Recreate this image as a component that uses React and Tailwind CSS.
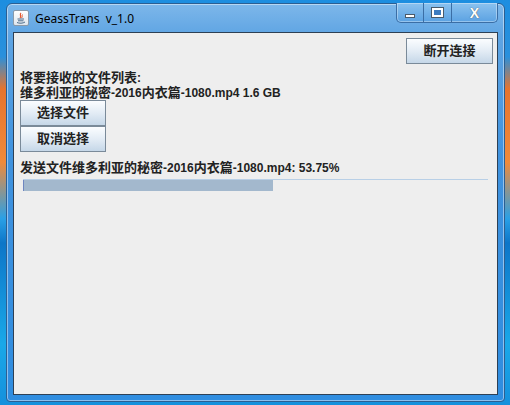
import React from 'react';

const font = { fontFamily: '"Liberation Sans", "Noto Sans CJK SC", sans-serif' };

// CJK glyphs render a touch larger than the latin runs, like the Java dialog font
const Mixed = ({ text }) => (
    <>
        {text.split(/([\u4e00-\u9fff]+)/).map((part, i) =>
            /[\u4e00-\u9fff]/.test(part)
                ? <span key={i} className="text-[13px] leading-[14px]">{part}</span>
                : <span key={i}>{part}</span>
        )}
    </>
);

const WinButton = ({ children, className = '' }) => (
    <button
        className={`h-[26px] border border-[#7a8a99] bg-gradient-to-b from-[#fbfdff] via-[#e3ecf5] to-[#c5d7e8] text-[13px] font-bold text-[#222] ${className}`}
        style={font}
    >
        {children}
    </button>
);

const JavaIcon = () => (
    <div className="w-[16px] h-[16px] rounded-[2px] border border-[#8a9aaa] bg-gradient-to-b from-white to-[#dfe6ee] flex items-center justify-center">
        <svg width="12" height="12" viewBox="0 0 12 12">
            <path d="M6 1 C4 3 7 4 5 6" stroke="#e4572e" strokeWidth="1.2" fill="none" />
            <path d="M7.5 2.5 C6.5 4 8 4.5 6.5 6" stroke="#e4572e" strokeWidth="1" fill="none" />
            <path d="M2.5 7 H9" stroke="#4a6b8a" strokeWidth="1" />
            <path d="M3 8.8 H8.5" stroke="#4a6b8a" strokeWidth="1" />
            <path d="M2 10.5 C4 11.5 8 11.5 10 10" stroke="#4a6b8a" strokeWidth="1" fill="none" />
        </svg>
    </div>
);

const App = () => {
    return (
        <div className="w-[510px] h-[405px] overflow-hidden pt-[3px] pl-[6px] pr-[5px] pb-[3px] bg-[linear-gradient(180deg,#1d8ee0_0%,#2a90dc_14%,#e6742e_22%,#f08a3a_40%,#2aa0e6_54%,#0d76c8_60%,#1aa8e8_85%,#1590dc_100%)]">
            {/* window frame */}
            <div className="w-full h-full rounded-t-[6px] rounded-b-[4px] border border-[#2b5f93] bg-[linear-gradient(180deg,#7db7ea_0%,#5ea4e3_8%,#3f92de_40%,#2f8de0_100%)] flex flex-col shadow-[inset_0_0_0_1px_rgba(255,255,255,0.45)]">
                {/* title bar */}
                <div className="h-[28px] flex items-start pl-[6px] pr-[6px]">
                    <div className="mt-[6px]"><JavaIcon /></div>
                    <span className="ml-[6px] mt-[6px] text-[12px] text-black" style={{ fontFamily: '"Noto Sans", "Open Sans", sans-serif' }}>
                        GeassTrans&nbsp;&nbsp;v_1.0
                    </span>
                    <div className="ml-auto flex h-[20px] -mt-[1px] border border-[#3b6ea5] border-t-0 rounded-b-[5px] overflow-hidden bg-[linear-gradient(180deg,#8cc2ef,#5ba2e2)] shadow-[inset_0_0_0_1px_rgba(255,255,255,0.35)]">
                        <div className="w-[27px] flex items-center justify-center border-r border-[#3b6ea5]">
                            <div className="w-[10px] h-[4px] mt-[6px] bg-white border border-[#4a5a6a]" />
                        </div>
                        <div className="w-[28px] flex items-center justify-center border-r border-[#3b6ea5]">
                            <div className="w-[11px] h-[9px] bg-[#3d7cc0] border-2 border-white outline outline-1 outline-[#4a5a6a]" />
                        </div>
                        <div className="w-[45px] flex items-center justify-center">
                            <span className="text-[14px] font-black text-white leading-none [text-shadow:0_0_1px_#333]" style={font}>X</span>
                        </div>
                    </div>
                </div>

                {/* client area */}
                <div className="flex-1 mx-[6px] mb-[6px] border border-[#2d4055] bg-[#eeeeee] flex flex-col pl-[6px] pr-[4px] pt-[5px] text-[12px] font-bold text-[#222]" style={font}>
                    <div className="flex justify-end">
                        <WinButton className="w-[87px]">断开连接</WinButton>
                    </div>
                    <div className="mt-[7px] h-[15px] leading-[15px]"><Mixed text="将要接收的文件列表:" /></div>
                    <div className="h-[15px] leading-[15px]"><Mixed text="维多利亚的秘密-2016内衣篇-1080.mp4 1.6 GB" /></div>
                    <WinButton className="w-[86px] mt-[-1px]">选择文件</WinButton>
                    <WinButton className="w-[86px]">取消选择</WinButton>
                    <div className="mt-[9px] h-[15px] leading-[15px]"><Mixed text="发送文件维多利亚的秘密-2016内衣篇-1080.mp4: 53.75%" /></div>
                    <div className="ml-[3px] mr-[5px] mt-[3px] h-[12px] border-t border-[#b8cfe6]">
                        <div className="h-[11px] w-[53.75%] bg-[#a3b8cd] border-l border-[#6f86c0]" />
                    </div>
                </div>
            </div>
        </div>
    );
};

export default App;
